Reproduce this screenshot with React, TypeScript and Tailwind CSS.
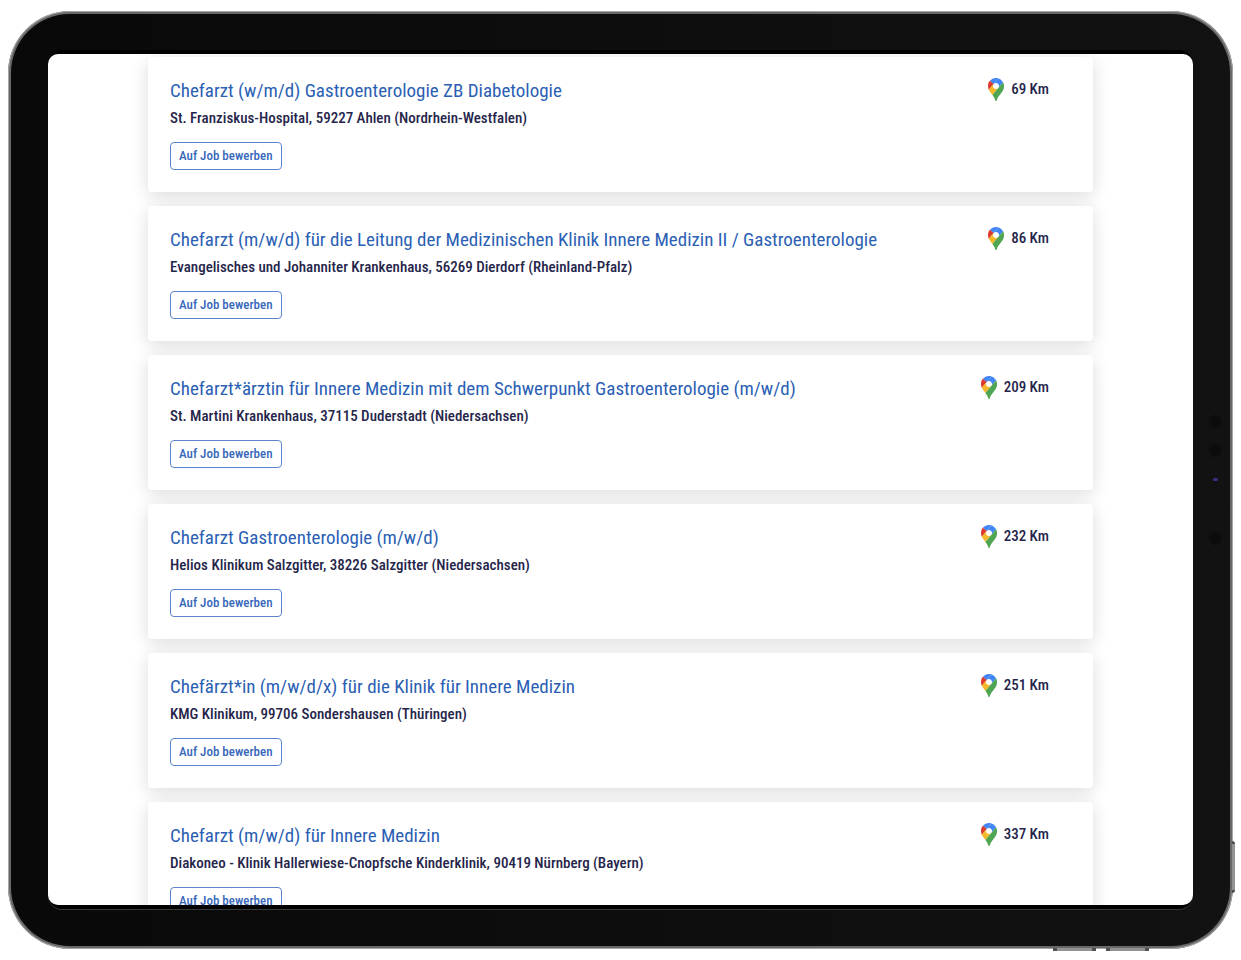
type Job = { title: string; place: string; km: number };

const jobs: Job[] = [
  { title: "Chefarzt (w/m/d) Gastroenterologie ZB Diabetologie", place: "St. Franziskus-Hospital, 59227 Ahlen (Nordrhein-Westfalen)", km: 69 },
  { title: "Chefarzt (m/w/d) für die Leitung der Medizinischen Klinik Innere Medizin II / Gastroenterologie", place: "Evangelisches und Johanniter Krankenhaus, 56269 Dierdorf (Rheinland-Pfalz)", km: 86 },
  { title: "Chefarzt*ärztin für Innere Medizin mit dem Schwerpunkt Gastroenterologie (m/w/d)", place: "St. Martini Krankenhaus, 37115 Duderstadt (Niedersachsen)", km: 209 },
  { title: "Chefarzt Gastroenterologie (m/w/d)", place: "Helios Klinikum Salzgitter, 38226 Salzgitter (Niedersachsen)", km: 232 },
  { title: "Chefärzt*in (m/w/d/x) für die Klinik für Innere Medizin", place: "KMG Klinikum, 99706 Sondershausen (Thüringen)", km: 251 },
  { title: "Chefarzt (m/w/d) für Innere Medizin", place: "Diakoneo - Klinik Hallerwiese-Cnopfsche Kinderklinik, 90419 Nürnberg (Bayern)", km: 337 },
];

function MapPin() {
  return (
    <svg className="h-[23px] w-4 shrink-0" viewBox="0 0 92.3 132.3" preserveAspectRatio="none" aria-hidden="true">
      <path fill="#4285f4" d="M60.2 2.2C55.8.8 51 0 46.1 0 32 0 19.3 6.4 10.8 16.5l21.8 18.3L60.2 2.2z" />
      <path fill="#dc3a2f" d="M10.8 16.5C4.1 24.5 0 34.9 0 46.1c0 8.7 1.7 15.7 4.6 22l28-33.3-21.8-18.3z" />
      <path fill="#4285f4" d="M46.2 28.5c9.8 0 17.7 7.9 17.7 17.7 0 4.3-1.6 8.3-4.2 11.4 0 0 13.9-16.6 27.5-32.7-5.6-10.8-15.3-19-27-22.7L32.6 34.8c3.3-3.8 8.1-6.3 13.6-6.3" />
      <path fill="#f5b82a" d="M46.2 63.8c-9.8 0-17.7-7.9-17.7-17.7 0-4.3 1.5-8.3 4.1-11.3l-28 33.3c4.8 10.6 12.8 19.2 21 29.9l34.1-40.5c-3.3 3.9-8.1 6.3-13.5 6.3" />
      <path fill="#4fa552" d="M59.1 109.2c15.4-24.1 33.3-35 33.3-63 0-7.7-1.9-14.9-5.2-21.3L25.6 98c2.6 3.4 5.3 7.3 7.9 11.3 9.4 14.5 6.8 23.1 12.8 23.1s3.4-8.7 12.8-23.2" />
    </svg>
  );
}

function JobCard({ job }: { job: Job }) {
  return (
    <li className="flex items-start justify-between rounded-[4px] bg-white pt-5 pr-11 pb-[22px] pl-[22px] shadow-[0_4px_18px_rgba(0,0,0,0.14)]">
      <div>
        <h2 className="text-[19px] leading-7 text-[#2b5fb4]">{job.title}</h2>
        <p className="text-[15px] leading-[26px] font-medium text-[#25254a]">{job.place}</p>
        <button type="button" className="mt-[11px] h-7 rounded-[4px] border border-[#5b86cc] px-2 text-[13px] leading-6 font-medium text-[#3868bb]">
          Auf Job bewerben
        </button>
      </div>
      <div className="flex items-start gap-[7px] pt-px">
        <MapPin />
        <span className="text-[15px] leading-[22px] font-medium text-[#25254a]">{job.km} Km</span>
      </div>
    </li>
  );
}

export default function App() {
  return (
    <div className="h-screen overflow-hidden bg-white pt-[11px] pr-2 pb-[11px] pl-2 font-['Roboto_Condensed','Liberation_Sans_Narrow',sans-serif]">
      <div className="relative h-full rounded-[62px] bg-[#66686a] p-[3px] shadow-[inset_0_0_0_1px_#a5a6a7]">
        <div className="absolute right-[-2px] bottom-14 h-[52px] w-[3px] rounded-r-sm border-y-3 border-[#4c4c4c] bg-[#929292]" />
        <div className="absolute right-[137px] bottom-[-2px] h-[3px] w-[43px] border-x-4 border-[#505050] bg-[#929292]" />
        <div className="absolute right-[84px] bottom-[-2px] h-[3px] w-[43px] border-x-4 border-[#505050] bg-[#929292]" />
        <div className="relative h-full rounded-[59px] bg-linear-to-r from-[#090909] to-[#121212] pt-9 pr-[37px] pb-[37px] pl-[37px]">
          <div className="absolute top-[401px] right-[8px] flex w-[14px] flex-col items-center" aria-hidden="true">
            <span className="size-[13px] rounded-full bg-[#0c0c0d]" />
            <span className="mt-4 size-[13px] rounded-full bg-[#0c0c0d]" />
            <span className="mt-[21px] h-[3px] w-[5px] rounded-full bg-[#36308a]" />
            <span className="mt-[51px] size-[13px] rounded-full bg-[#0c0c0d]" />
          </div>
          <div className="h-full rounded-[14px] border-y-4 border-black shadow-[0_1px_0_#3a3a3a]">
            <main className="h-full overflow-hidden rounded-[10px] bg-white px-[100px] pt-[3px]">
              <ul className="flex flex-col gap-[14px]">
                {jobs.map((job) => (
                  <JobCard key={job.title} job={job} />
                ))}
              </ul>
            </main>
          </div>
        </div>
      </div>
    </div>
  );
}
